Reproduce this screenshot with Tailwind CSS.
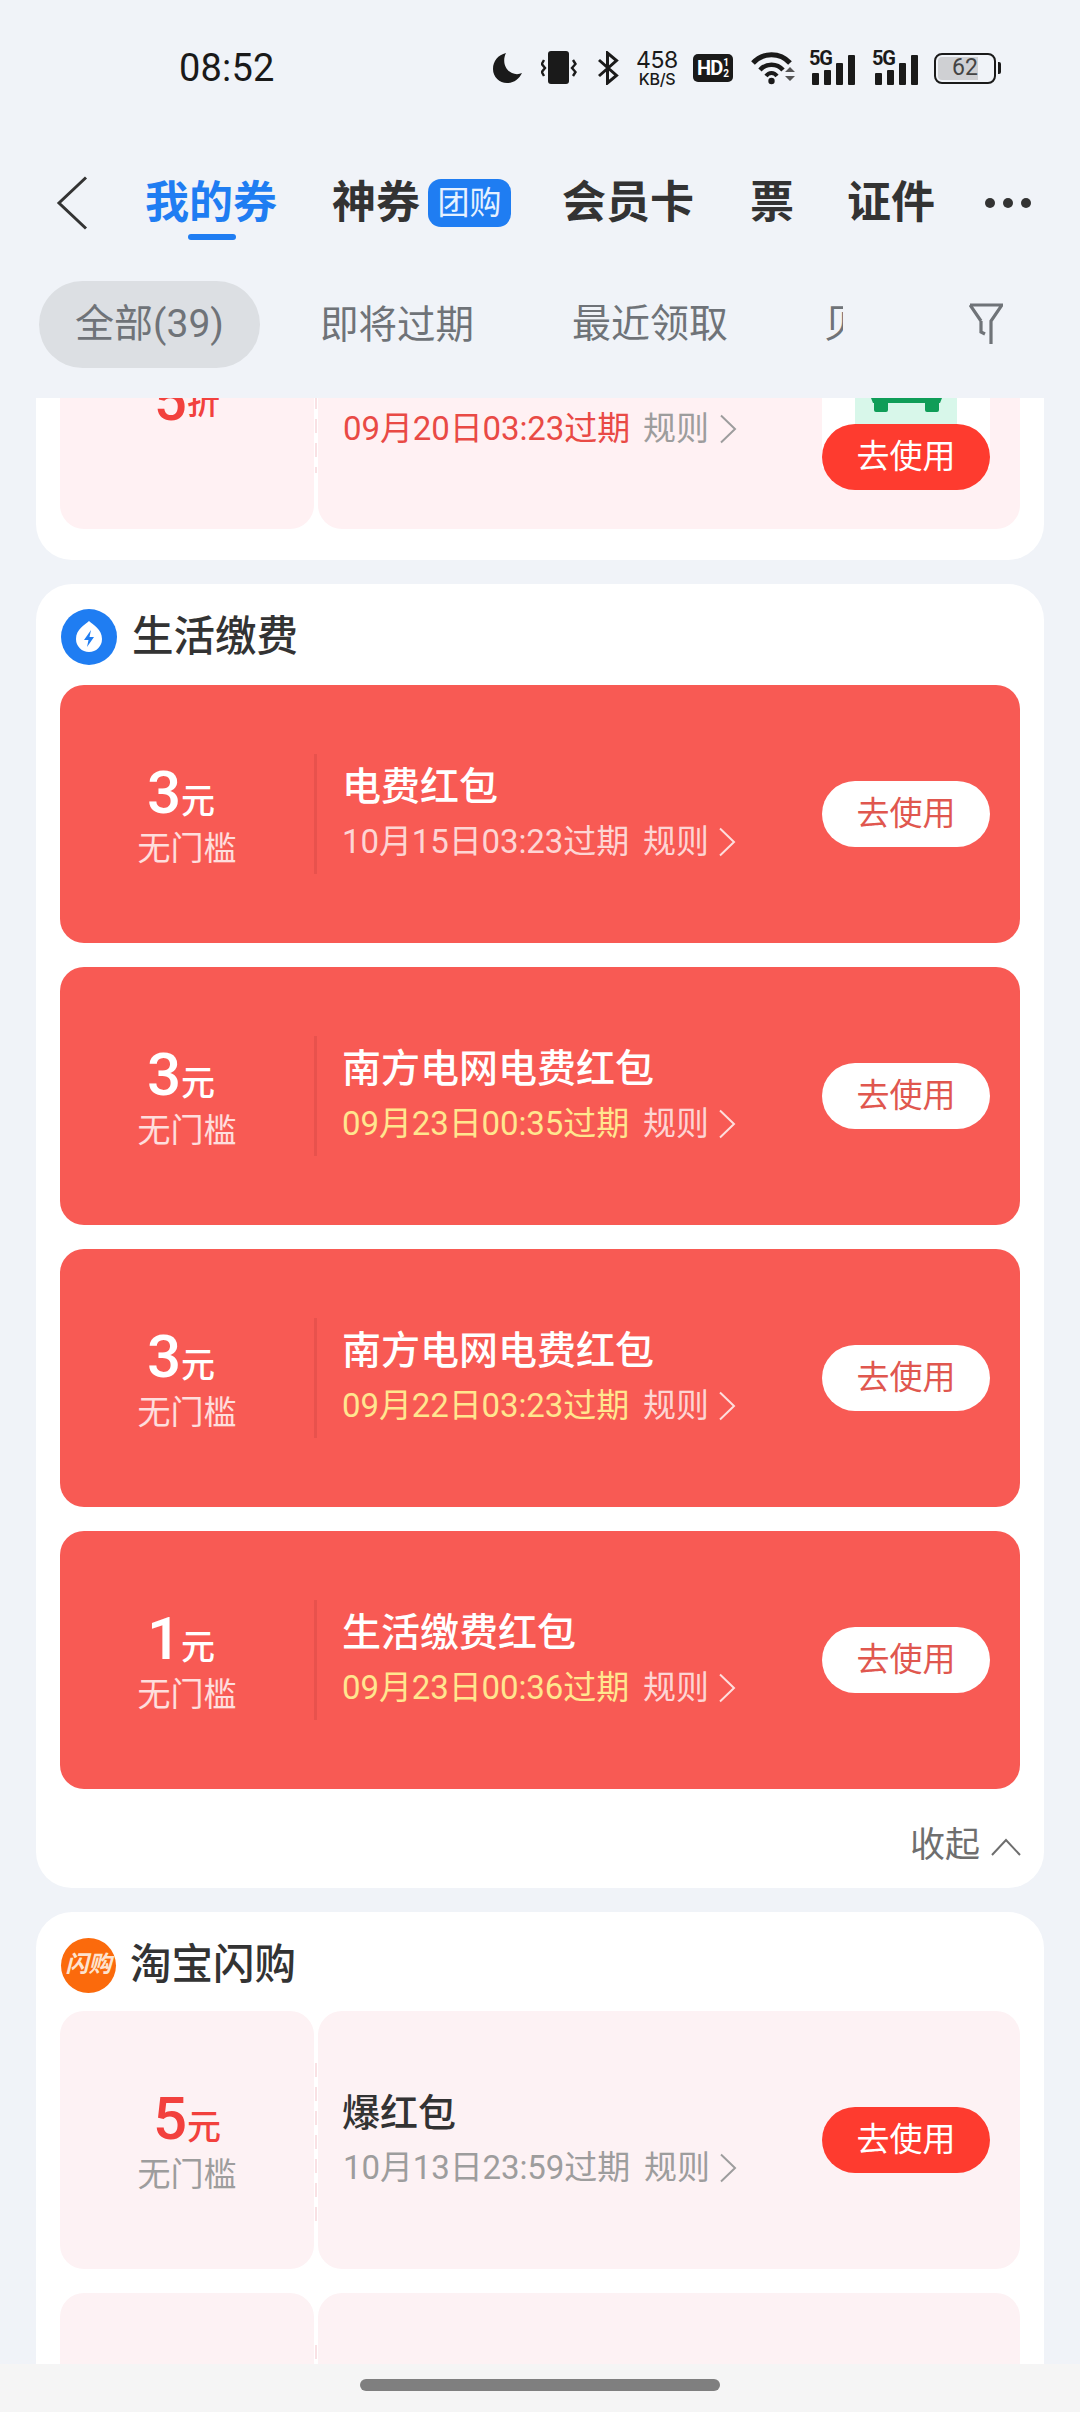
<!DOCTYPE html>
<html lang="zh">
<head>
<meta charset="utf-8">
<script src="https://cdn.jsdelivr.net/npm/@tailwindcss/browser@4"></script>
</head>
<body class="m-0">
<div class="w-[1080px] h-[2412px] overflow-hidden bg-[#f0f3f8] flex flex-col font-['Roboto','Noto_Sans_CJK_SC',sans-serif] text-[#333333]">

  <!-- status bar -->
  <div class="h-[136px] shrink-0 flex items-center relative">
    <div class="ml-[179px] w-[96px] text-[38px] leading-[44px] text-[#1a1a1a] tracking-[0.2px] whitespace-nowrap">08:52</div>
    <div class="ml-[217px] flex items-center text-[#1a1a1a] h-[40px]">
      <svg class="w-[30px] h-[32px]" viewBox="0 0 30 32"><path d="M14 1C6 3 1 9 1 17c0 8 6.500 14 14 14 7 0 12-4 15-10-3 1.500-7 1.500-10 0C13 18 10 9 14 1z" fill="#1a1a1a"/></svg>
      <svg class="ml-[19px] w-[36px] h-[34px]" viewBox="0 0 36 34"><rect x="7" y="0" width="21" height="33" rx="3" fill="#1a1a1a"/><path d="M3 9 L0.800 13 L4 17 L0.800 21 L3 25" fill="none" stroke="#1a1a1a" stroke-width="2.400"/><path d="M32 9 L34.500 13 L31 17 L34.500 21 L32 25" fill="none" stroke="#1a1a1a" stroke-width="2.400"/></svg>
      <svg class="ml-[20px] w-[22px] h-[34px]" viewBox="0 0 22 34"><path d="M2 9 L19.500 24.500 L10.500 32 L10.500 2 L19.500 9.500 L2 25" fill="none" stroke="#1a1a1a" stroke-width="3"/></svg>
      <div class="ml-[16px] w-[44px] flex flex-col items-center font-['Inter','Noto_Sans',sans-serif]">
        <span class="text-[23px] leading-[20px] tracking-[-0.4px]">458</span>
        <span class="mt-[1px] text-[16px] leading-[16px] font-medium tracking-[-0.3px]">KB/S</span>
      </div>
      <div class="ml-[14px] w-[40px] h-[28px] rounded-[5px] bg-[#1a1a1a] text-white flex items-center justify-center font-bold">
        <span class="text-[20px] leading-[20px] tracking-[-1px]">HD</span>
        <span class="flex flex-col text-[10px] leading-[11px] ml-[1px]"><span>1</span><span>2</span></span>
      </div>
      <svg class="ml-[18px] w-[46px] h-[34px]" viewBox="0 0 46 34"><path d="M2 12 C12 1 29 1 39 12" fill="none" stroke="#1a1a1a" stroke-width="5"/><path d="M9 19 C15 12 26 12 32 19" fill="none" stroke="#1a1a1a" stroke-width="4.500"/><path d="M15 25 C18 21 23 21 26 25" fill="none" stroke="#1a1a1a" stroke-width="4"/><circle cx="20.500" cy="30" r="3.200" fill="#1a1a1a"/><path d="M34 21 L39 16 L44 21Z M34 25 L39 30 L44 25Z" fill="#555555"/></svg>
      <div class="ml-[12px] relative w-[46px] h-[34px]">
        <span class="absolute left-0 -top-[3px] text-[20px] leading-[20px] font-bold tracking-[-1.2px]">5G</span>
        <div class="absolute left-[3px] bottom-0 flex items-end gap-[5px]"><i class="block w-[7px] h-[12px] bg-[#1a1a1a] rounded-[1px]"></i><i class="block w-[7px] h-[15px] bg-[#1a1a1a] rounded-[1px]"></i><i class="block w-[7px] h-[22px] bg-[#1a1a1a] rounded-[1px]"></i><i class="block w-[7px] h-[30px] bg-[#1a1a1a] rounded-[1px]"></i></div>
      </div>
      <div class="ml-[17px] relative w-[46px] h-[34px]">
        <span class="absolute left-0 -top-[3px] text-[20px] leading-[20px] font-bold tracking-[-1.2px]">5G</span>
        <div class="absolute left-[3px] bottom-0 flex items-end gap-[5px]"><i class="block w-[7px] h-[12px] bg-[#1a1a1a] rounded-[1px]"></i><i class="block w-[7px] h-[15px] bg-[#1a1a1a] rounded-[1px]"></i><i class="block w-[7px] h-[22px] bg-[#1a1a1a] rounded-[1px]"></i><i class="block w-[7px] h-[30px] bg-[#1a1a1a] rounded-[1px]"></i></div>
      </div>
      <div class="ml-[16px] w-[62px] h-[31px] border-[2.5px] border-[#1a1a1a] rounded-[8px] relative p-[2px] flex">
        <div class="w-[40px] h-full bg-[#cfd0d3] rounded-l-[4px]"></div>
        <span class="absolute inset-0 flex items-center justify-center text-[23px] leading-[24px] text-[#444444]">62</span>
      </div>
      <div class="ml-[2px] w-[3px] h-[12px] bg-[#1a1a1a] rounded-r-[2px]"></div>
    </div>
  </div>

  <!-- header tabs -->
  <div class="h-[134px] shrink-0 flex items-center text-[44px] leading-[56px] font-bold whitespace-nowrap text-[#333333]">
    <svg class="ml-[56px] w-[32px] h-[54px] shrink-0" viewBox="0 0 32 54"><path d="M30 1.500 L3 27 L30 52.500" fill="none" stroke="#333333" stroke-width="3"/></svg>
    <div class="ml-[57px] w-[133px] relative text-[#1f7df2]">我的券
      <div class="absolute left-[43px] top-[59px] w-[48px] h-[6px] rounded-[3px] bg-[#1f7df2]"></div>
    </div>
    <div class="ml-[54px] w-[88px]">神券</div>
    <div class="ml-[8px] w-[83px] h-[48px] rounded-[13px] bg-[#1f7df2] text-[#e6f1ff] text-[32px] leading-[48px] font-normal flex items-center justify-center">团购</div>
    <div class="ml-[51px] w-[133px]">会员卡</div>
    <div class="ml-[55px] w-[44px]">票</div>
    <div class="ml-[53px] w-[88px]">证件</div>
    <div class="ml-[50px] flex gap-[8px] items-center"><i class="block w-[10px] h-[10px] rounded-full bg-[#333333]"></i><i class="block w-[10px] h-[10px] rounded-full bg-[#333333]"></i><i class="block w-[10px] h-[10px] rounded-full bg-[#333333]"></i></div>
  </div>

  <!-- filters -->
  <div class="h-[128px] shrink-0 pt-[11px] flex items-start text-[39px] leading-[87px] text-[#6f7378] whitespace-nowrap">
    <div class="ml-[39px] w-[221px] h-[87px] rounded-[44px] bg-[#dcdfe3] text-center">全部(39)</div>
    <div class="ml-[60px] w-[157px] text-[38.500px]">即将过期</div>
    <div class="ml-[95px] w-[156px]">最近领取</div>
    <div class="ml-[96px] w-[19px] overflow-hidden">贝</div>
    <svg class="ml-[126px] mt-[22px] w-[34px] h-[42px]" viewBox="0 0 34 42"><path d="M1 2 H33 L22 18 V41 M12 18 L1 2 M12 18 V29 L16 31" fill="none" stroke="#6f7378" stroke-width="3.200"/></svg>
  </div>

  <!-- scrolling list -->
  <div class="h-[1966px] shrink-0 overflow-hidden">

    <!-- clipped card -->
    <div class="mx-[36px] bg-white rounded-b-[36px] pb-[31px] px-[24px] mb-[24px]">
      <div class="-mt-[127px] h-[258px] flex relative">
        <div class="w-[254px] rounded-[24px] bg-[#fff1f3] flex items-center justify-center text-[#f2413d]">
          <span class="text-[58px] leading-[60px] font-medium">5</span><span class="text-[33px] leading-[60px] mt-[6px] font-medium">折</span>
        </div>
        <div class="w-[4px] bg-white flex justify-center"><div class="mt-[52px] w-[2px] h-[150px] bg-[repeating-linear-gradient(to_bottom,#f9e1e4_0,#f9e1e4_14px,transparent_14px,transparent_24px)]"></div></div>
        <div class="flex-1 rounded-[24px] bg-[#fff1f3] flex items-center pl-[25px] pr-[30px] relative">
          <div class="flex flex-col">
            <div class="h-[57px]"></div>
            <div class="flex items-center h-[50px] text-[33px] leading-[50px] whitespace-nowrap"><span class="w-[286px] text-[#e94a45] tracking-[-0.1px]">09月20日03:23过期</span><span class="ml-[14px] text-[#9d9d9d]">规则</span>
              <svg class="ml-[10px] w-[18px] h-[30px]" viewBox="0 0 18 30"><path d="M2 1.500 L16 15 L2 28.500" fill="none" stroke="#9d9d9d" stroke-width="2"/></svg>
            </div>
          </div>
          <div class="absolute right-[30px] bottom-[39px] w-[168px] flex flex-col items-center">
            <div class="w-full h-[110px] bg-white flex justify-center">
              <div class="w-[102px] h-full bg-[#d8f7ea] relative">
                <svg class="absolute left-[16px] top-[40px] w-[71px] h-[14px]" viewBox="0 0 71 14"><path d="M0 0 H71 L69 5 H68 V12 Q68 14 66 14 H56 Q54 14 54 12 V5 H17 V12 Q17 14 15 14 H5 Q3 14 3 12 V5 H2Z" fill="#0f9d58"/></svg>
              </div>
            </div>
            <div class="relative -mt-[44px] w-full h-[66px] rounded-[33px] bg-[#fe3b2f] text-white text-[33px] leading-[66px] text-center">去使用</div>
          </div>
        </div>
      </div>
    </div>

    <!-- 生活缴费 -->
    <div class="mx-[36px] bg-white rounded-[36px] px-[24px] mb-[24px]">
      <div class="h-[101px] flex items-center pt-[5px]">
        <svg class="w-[56px] h-[56px] ml-[1px]" viewBox="0 0 56 56"><circle cx="28" cy="28" r="28" fill="#1f7df2"/><path d="M28 12 C32 16 41 20 41 30 A13 13 0 0 1 15 30 C15 20 24 16 28 12Z" fill="#ffffff"/><path d="M30 21 L23 31 H27.500 L26 38 L33 28 H28.500Z" fill="#1f7df2"/></svg>
        <div class="ml-[15px] text-[41.500px] leading-[56px] font-medium">生活缴费</div>
      </div>

      <div class="h-[258px] mb-[24px] rounded-[24px] bg-[#f85a54] flex items-center text-white">
        <div class="w-[254px] flex flex-col items-center pt-[9px]">
          <div class="mb-[5px] mr-[12px] flex items-baseline h-[56px] leading-[56px]"><span class="text-[60px] font-medium">3</span><span class="text-[34px] font-medium">元</span></div>
          <div class="text-[33px] leading-[46px] text-white/80">无门槛</div>
        </div>
        <div class="w-[3px] h-[120px] bg-[#e8524d]"></div>
        <div class="ml-[25px] flex flex-col">
          <div class="text-[39px] leading-[50px] h-[55px] font-medium">电费红包</div>
          <div class="flex items-center h-[50px] text-[33px] leading-[50px] whitespace-nowrap"><span class="w-[286px] text-white/75 tracking-[-0.1px]">10月15日03:23过期</span><span class="ml-[15px] text-white/75">规则</span>
            <svg class="ml-[9px] w-[18px] h-[30px]" viewBox="0 0 18 30"><path d="M2 1.500 L16 15 L2 28.500" fill="none" stroke="#ffffff" stroke-opacity="0.8" stroke-width="2"/></svg>
          </div>
        </div>
        <div class="ml-auto mr-[30px] w-[168px] h-[66px] rounded-[33px] bg-white text-[#e0574f] text-[33px] leading-[66px] text-center">去使用</div>
      </div>

      <div class="h-[258px] mb-[24px] rounded-[24px] bg-[#f85a54] flex items-center text-white">
        <div class="w-[254px] flex flex-col items-center pt-[9px]">
          <div class="mb-[5px] mr-[12px] flex items-baseline h-[56px] leading-[56px]"><span class="text-[60px] font-medium">3</span><span class="text-[34px] font-medium">元</span></div>
          <div class="text-[33px] leading-[46px] text-white/80">无门槛</div>
        </div>
        <div class="w-[3px] h-[120px] bg-[#e8524d]"></div>
        <div class="ml-[25px] flex flex-col">
          <div class="text-[39px] leading-[50px] h-[55px] font-medium">南方电网电费红包</div>
          <div class="flex items-center h-[50px] text-[33px] leading-[50px] whitespace-nowrap"><span class="w-[286px] text-[#ffe68f] tracking-[-0.1px]">09月23日00:35过期</span><span class="ml-[15px] text-white/75">规则</span>
            <svg class="ml-[9px] w-[18px] h-[30px]" viewBox="0 0 18 30"><path d="M2 1.500 L16 15 L2 28.500" fill="none" stroke="#ffffff" stroke-opacity="0.8" stroke-width="2"/></svg>
          </div>
        </div>
        <div class="ml-auto mr-[30px] w-[168px] h-[66px] rounded-[33px] bg-white text-[#e0574f] text-[33px] leading-[66px] text-center">去使用</div>
      </div>

      <div class="h-[258px] mb-[24px] rounded-[24px] bg-[#f85a54] flex items-center text-white">
        <div class="w-[254px] flex flex-col items-center pt-[9px]">
          <div class="mb-[5px] mr-[12px] flex items-baseline h-[56px] leading-[56px]"><span class="text-[60px] font-medium">3</span><span class="text-[34px] font-medium">元</span></div>
          <div class="text-[33px] leading-[46px] text-white/80">无门槛</div>
        </div>
        <div class="w-[3px] h-[120px] bg-[#e8524d]"></div>
        <div class="ml-[25px] flex flex-col">
          <div class="text-[39px] leading-[50px] h-[55px] font-medium">南方电网电费红包</div>
          <div class="flex items-center h-[50px] text-[33px] leading-[50px] whitespace-nowrap"><span class="w-[286px] text-[#ffe68f] tracking-[-0.1px]">09月22日03:23过期</span><span class="ml-[15px] text-white/75">规则</span>
            <svg class="ml-[9px] w-[18px] h-[30px]" viewBox="0 0 18 30"><path d="M2 1.500 L16 15 L2 28.500" fill="none" stroke="#ffffff" stroke-opacity="0.8" stroke-width="2"/></svg>
          </div>
        </div>
        <div class="ml-auto mr-[30px] w-[168px] h-[66px] rounded-[33px] bg-white text-[#e0574f] text-[33px] leading-[66px] text-center">去使用</div>
      </div>

      <div class="h-[258px] rounded-[24px] bg-[#f85a54] flex items-center text-white">
        <div class="w-[254px] flex flex-col items-center pt-[9px]">
          <div class="mb-[5px] mr-[12px] flex items-baseline h-[56px] leading-[56px]"><span class="text-[60px] font-medium">1</span><span class="text-[34px] font-medium">元</span></div>
          <div class="text-[33px] leading-[46px] text-white/80">无门槛</div>
        </div>
        <div class="w-[3px] h-[120px] bg-[#e8524d]"></div>
        <div class="ml-[25px] flex flex-col">
          <div class="text-[39px] leading-[50px] h-[55px] font-medium">生活缴费红包</div>
          <div class="flex items-center h-[50px] text-[33px] leading-[50px] whitespace-nowrap"><span class="w-[286px] text-[#ffe68f] tracking-[-0.1px]">09月23日00:36过期</span><span class="ml-[15px] text-white/75">规则</span>
            <svg class="ml-[9px] w-[18px] h-[30px]" viewBox="0 0 18 30"><path d="M2 1.500 L16 15 L2 28.500" fill="none" stroke="#ffffff" stroke-opacity="0.8" stroke-width="2"/></svg>
          </div>
        </div>
        <div class="ml-auto mr-[30px] w-[168px] h-[66px] rounded-[33px] bg-white text-[#e0574f] text-[33px] leading-[66px] text-center">去使用</div>
      </div>

      <div class="h-[99px] pt-[14px] flex items-center justify-end text-[35px] leading-[50px] text-[#6e6e6e]">
        <span>收起</span>
        <svg class="ml-[11px] -mr-[1px] mt-[2px] w-[30px] h-[18px]" viewBox="0 0 30 18"><path d="M1 17 L15 2 L29 17" fill="none" stroke="#6e6e6e" stroke-width="2"/></svg>
      </div>
    </div>

    <!-- 淘宝闪购 -->
    <div class="mx-[36px] bg-white rounded-t-[36px] px-[24px]">
      <div class="h-[99px] flex items-center pt-[7px]">
        <div class="ml-[1px] w-[55px] h-[55px] rounded-full bg-[#fb6a0c] flex items-center justify-center text-[#fde3cf] text-[23px] leading-[26px] font-bold italic whitespace-nowrap">闪购</div>
        <div class="ml-[14px] text-[41.500px] leading-[56px] font-medium">淘宝闪购</div>
      </div>

      <div class="h-[258px] mb-[24px] flex">
        <div class="w-[254px] rounded-[24px] bg-[#fdf2f4] flex flex-col items-center justify-center pt-[9px]">
          <div class="mb-[5px] flex items-baseline h-[56px] leading-[56px] text-[#f2413d]"><span class="text-[60px] font-medium">5</span><span class="text-[34px] font-medium">元</span></div>
          <div class="text-[33px] leading-[46px] text-[#9d9d9d]">无门槛</div>
        </div>
        <div class="w-[4px] bg-white flex justify-center"><div class="mt-[52px] w-[2px] h-[160px] bg-[repeating-linear-gradient(to_bottom,#f9e1e4_0,#f9e1e4_14px,transparent_14px,transparent_24px)]"></div></div>
        <div class="flex-1 rounded-[24px] bg-[#fdf2f4] flex items-center pl-[25px] pr-[30px]">
          <div class="flex flex-col">
            <div class="-ml-[1px] text-[38px] leading-[50px] h-[55px] font-medium">爆红包</div>
            <div class="flex items-center h-[50px] text-[33px] leading-[50px] whitespace-nowrap text-[#9d9d9d]"><span class="w-[286px] tracking-[-0.1px]">10月13日23:59过期</span><span class="ml-[15px]">规则</span>
              <svg class="ml-[9px] w-[18px] h-[30px]" viewBox="0 0 18 30"><path d="M2 1.500 L16 15 L2 28.500" fill="none" stroke="#9d9d9d" stroke-width="2"/></svg>
            </div>
          </div>
          <div class="ml-auto w-[168px] h-[66px] rounded-[33px] bg-[#fe3b2f] text-white text-[33px] leading-[66px] text-center">去使用</div>
        </div>
      </div>

      <div class="h-[258px] flex">
        <div class="w-[254px] rounded-[24px] bg-[#fdf2f4]"></div>
        <div class="w-[4px] bg-white flex justify-center"><div class="mt-[52px] w-[2px] h-[160px] bg-[repeating-linear-gradient(to_bottom,#f9e1e4_0,#f9e1e4_14px,transparent_14px,transparent_24px)]"></div></div>
        <div class="flex-1 rounded-[24px] bg-[#fdf2f4]"></div>
      </div>
    </div>
  </div>

  <!-- gesture bar -->
  <div class="h-[48px] shrink-0 bg-[#f5f5f5] flex justify-center pt-[15px]">
    <div class="w-[360px] h-[12px] rounded-[6px] bg-[#7f7f7f]"></div>
  </div>
</div>
</body>
</html>
